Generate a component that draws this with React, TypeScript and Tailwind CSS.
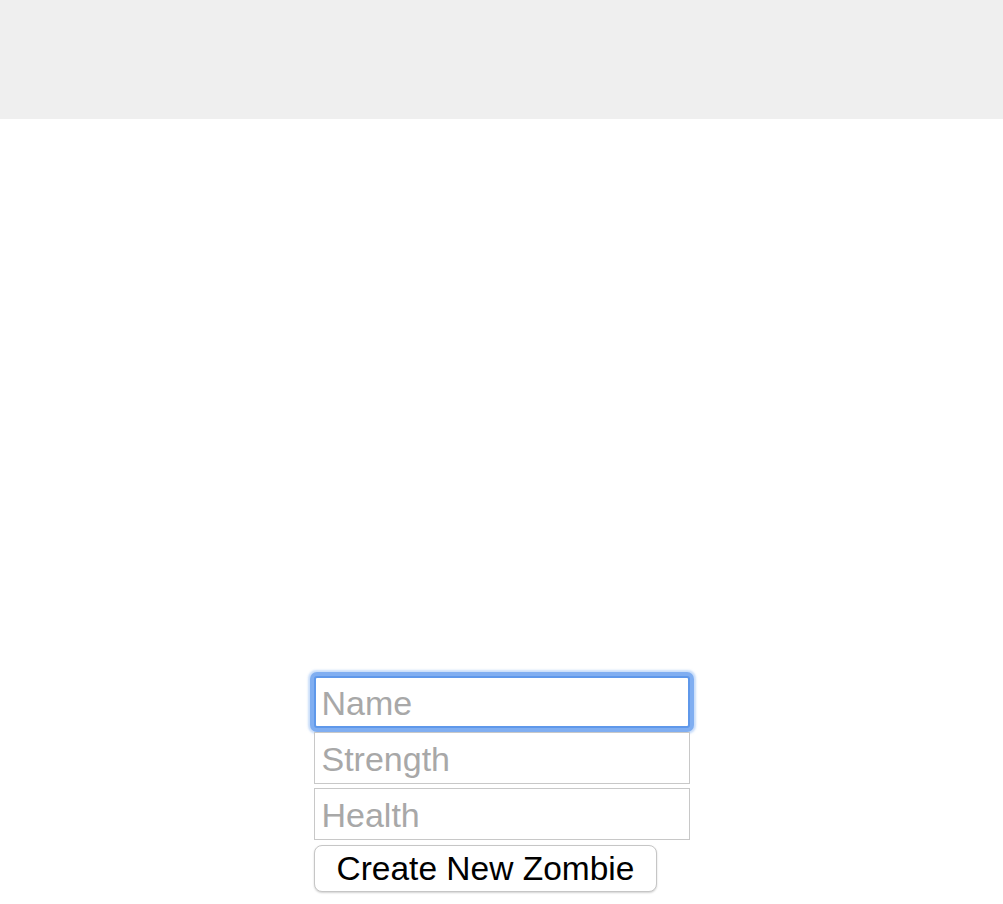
import React from 'react';

const fields = ['Name', 'Strength', 'Health'];

const App: React.FC = () => {
  return (
    <div className="min-h-[904px] bg-white font-['Liberation_Sans',Arial,sans-serif]">
      <header className="h-[119px] bg-[#efefef]" />

      <form
        className="w-[376px] mx-auto mt-[557px] flex flex-col items-start gap-[4px]"
        onSubmit={(e) => e.preventDefault()}
      >
        {fields.map((f, idx) => (
          <input
            key={f}
            type="text"
            placeholder={f}
            className={
              idx === 0
                ? "w-full h-[52px] pl-[6px] pr-[7px] pt-[3px] text-[34px] text-black bg-white border-2 border-[#5f98ea] rounded-[3px] outline-none shadow-[0_0_0_4px_rgba(115,166,238,0.85),0_0_2px_6px_rgba(150,190,245,0.5)] placeholder:text-[#a8a8a8]"
                : "w-full h-[52px] px-[7px] pt-[3px] text-[34px] text-black bg-white border border-[#c8c8c8] outline-none placeholder:text-[#a8a8a8]"
            }
          />
        ))}
        <button
          type="submit"
          className="mt-[1px] h-[47px] px-[22px] text-[33.5px] leading-none text-black bg-white border border-[#c6c6c6] rounded-[8px] shadow-[0_1px_2px_rgba(0,0,0,0.18)]"
        >
          Create New Zombie
        </button>
      </form>
    </div>
  );
};

export default App;
